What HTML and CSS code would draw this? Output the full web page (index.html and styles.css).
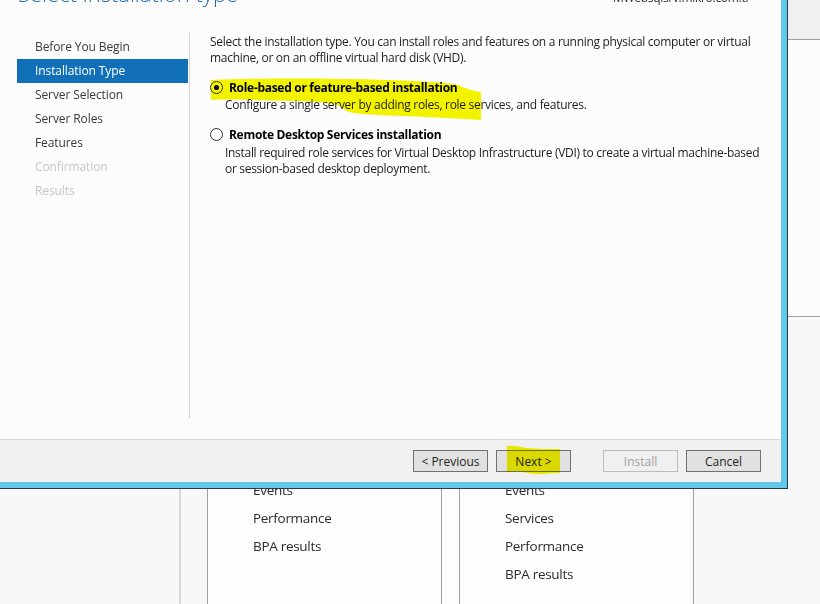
FILE: index.html
```html
<!DOCTYPE html>
<html>
<head>
<meta charset="utf-8">
<link rel="stylesheet" href="styles.css">
</head>
<body>
<div class="desktop">
  <div class="side"></div>
  <div class="rail"></div>
  <div class="main">
    <div class="topband"></div>
    <div class="welcome"></div>
    <div class="tiles">
      <div class="tile tile-a">
        <div class="tile-item">Events</div>
        <div class="tile-item">Performance</div>
        <div class="tile-item">BPA results</div>
      </div>
      <div class="tile tile-b">
        <div class="tile-item">Events</div>
        <div class="tile-item">Services</div>
        <div class="tile-item">Performance</div>
        <div class="tile-item">BPA results</div>
      </div>
    </div>
  </div>
</div>

<div class="dialog">
  <div class="dlg-header">
    <div class="dlg-title">Select installation type</div>
    <div class="dlg-server">MWebsqlsrv.mikro.com.tr</div>
  </div>
  <div class="dlg-body">
    <ul class="nav">
      <li class="nav-item">Before You Begin</li>
      <li class="nav-item is-active">Installation Type</li>
      <li class="nav-item">Server Selection</li>
      <li class="nav-item">Server Roles</li>
      <li class="nav-item">Features</li>
      <li class="nav-item is-disabled">Confirmation</li>
      <li class="nav-item is-disabled">Results</li>
    </ul>
    <div class="content">
      <p class="intro">Select the installation type. You can install roles and features on a running physical computer or virtual machine, or on an offline virtual hard disk (VHD).</p>
      <div class="option">
        <div class="option-head">
          <span class="radio is-checked"></span>
          <span class="option-label">Role-based or feature-based installation</span>
        </div>
        <p class="option-desc">Configure a single server by adding roles, role services, and features.</p>
      </div>
      <div class="option option-second">
        <div class="option-head">
          <span class="radio"></span>
          <span class="option-label">Remote Desktop Services installation</span>
        </div>
        <p class="option-desc">Install required role services for Virtual Desktop Infrastructure (VDI) to create a virtual machine-based or session-based desktop deployment.</p>
      </div>
    </div>
    <svg class="marker marker-option" width="300" height="50" viewBox="0 0 300 50">
      <path d="M2 4 C40 2 120 2 180 4 C215 5 235 7 246 8 C256 12 264 15 272 16 L272 44 C240 42 200 40 170 39 C150 38 140 37 136 34 C132 28 120 26 90 25 C50 24 20 23 2 24 Z" />
    </svg>
  </div>
  <div class="dlg-footer">
    <button class="btn">&lt; Previous</button>
    <button class="btn">Next &gt;</button>
    <button class="btn btn-gap" disabled>Install</button>
    <button class="btn">Cancel</button>
    <svg class="marker marker-next" width="60" height="32" viewBox="0 0 60 32">
      <path d="M1 1 C8 0 14 2 20 3 C32 4 44 4 54 4 L54 28 C46 28 40 29 30 29 C22 29 16 26 10 26 L1 27 Z" />
    </svg>
  </div>
</div>
</body>
</html>
```

FILE: styles.css
```css
* { box-sizing: border-box; }
html, body { margin: 0; padding: 0; }
body {
  width: 820px;
  height: 604px;
  overflow: hidden;
  position: relative;
  font-family: "Open Sans", "Noto Sans", sans-serif;
  background: #f8f8f8;
}

/* background server manager */
.desktop {
  display: flex;
  height: 604px;
  background: #f8f8f8;
}
.side {
  width: 181px;
  border-right: 2px solid #d8d8d8;
}
.rail {
  width: 27px;
  border-right: 1px solid #a0a0a0;
}
.main {
  flex: 1;
  display: flex;
  flex-direction: column;
}
.topband {
  height: 40px;
  background: #f0f0f0;
  border-bottom: 1px solid #a0a0a0;
}
.welcome {
  height: 277px;
  background: #fcfcfc;
  border-bottom: 1px solid #a0a0a0;
}
.tiles {
  flex: 1;
  display: flex;
}
.tile {
  background: #fdfdfd;
  padding-top: 159px;
}
.tile-a {
  width: 234px;
  border-right: 1px solid #a0a0a0;
  padding-left: 45px;
}
.tile-b {
  width: 252px;
  padding-left: 63px;
  border-right: 1px solid #a0a0a0;
  box-shadow: inset 17px 0 0 #fdfdfd, inset 18px 0 0 #a0a0a0;
}
.tile-item {
  font-size: 13.5px;
  letter-spacing: -0.3px;
  line-height: 28px;
  color: #2b2b2b;
}

/* dialog window */
.dialog {
  position: absolute;
  left: -6px;
  top: -46px;
  width: 793px;
  border: 6px solid #62c8e8;
  box-shadow: 0 0 0 1px #2a3a44;
  background: #fcfcfc;
  display: flex;
  flex-direction: column;
}
.dlg-header {
  height: 73px;
  display: flex;
  justify-content: space-between;
  align-items: flex-start;
  padding: 19px 31px 0 18px;
}
.dlg-title {
  font-size: 22px;
  line-height: 28px;
  color: #1f6cae;
  font-weight: 300;
}
.dlg-server {
  font-size: 12px;
  line-height: 16px;
  letter-spacing: -0.3px;
  color: #333;
  padding-top: 11px;
}
.dlg-body {
  height: 406px;
  display: flex;
  position: relative;
}
.nav {
  list-style: none;
  margin: 0 0 21px 0;
  padding: 2px 0 0 17px;
  width: 190px;
  border-right: 1px solid #d4d4d4;
}
.nav-item {
  height: 24px;
  line-height: 24px;
  padding-left: 18px;
  font-size: 12px;
  letter-spacing: -0.1px;
  color: #3a3a3a;
  width: 171px;
}
.nav-item.is-active {
  background: #1170b8;
  color: #fff;
}
.nav-item.is-disabled {
  color: #c6c6c6;
}
.content {
  padding: 1px 16px 0 20px;
  flex: 1;
  font-size: 12px;
  letter-spacing: -0.3px;
  color: #1e1e1e;
}
.intro {
  margin: 0;
  line-height: 16px;
}
.option {
  margin-top: 13px;
}
.option-second {
  margin-top: 13px;
}
.option-head {
  display: flex;
  align-items: center;
  height: 16px;
}
.radio {
  width: 13px;
  height: 13px;
  border: 1px solid #333;
  border-radius: 50%;
  background: #fff;
  margin-right: 6px;
  position: relative;
  flex: none;
}
.radio.is-checked::after {
  content: "";
  position: absolute;
  left: 3px;
  top: 3px;
  width: 5px;
  height: 5px;
  border-radius: 50%;
  background: #000;
}
.option-label {
  font-weight: 700;
  color: #000;
}
.option-desc {
  margin: 2px 0 0 15px;
  line-height: 16px;
}
.option-second .option-desc {
  margin-top: 3px;
}

/* highlighter marks */
.marker {
  position: absolute;
  mix-blend-mode: multiply;
  pointer-events: none;
}
.marker path { fill: #f6f600; }
.marker-option {
  left: 209px;
  top: 43px;
}

.dlg-footer {
  height: 43px;
  border-top: 1px solid #dadada;
  background: #f0f0f0;
  display: flex;
  justify-content: flex-end;
  align-items: flex-start;
  padding: 10px 20px 0 0;
  gap: 8px;
  position: relative;
}
.btn {
  width: 75px;
  height: 22px;
  border: 1px solid #707070;
  background: #e1e1e1;
  font-family: "Open Sans", "Noto Sans", sans-serif;
  font-size: 12px;
  color: #1e1e1e;
  padding: 1px 0 0;
  line-height: 20px;
}
.btn:disabled {
  border-color: #bcbcbc;
  background: #f0f0f0;
  color: #a0a0a0;
}
.btn-gap {
  margin-left: 24px;
}
.marker-next {
  left: 506px;
  top: 5px;
}
```
